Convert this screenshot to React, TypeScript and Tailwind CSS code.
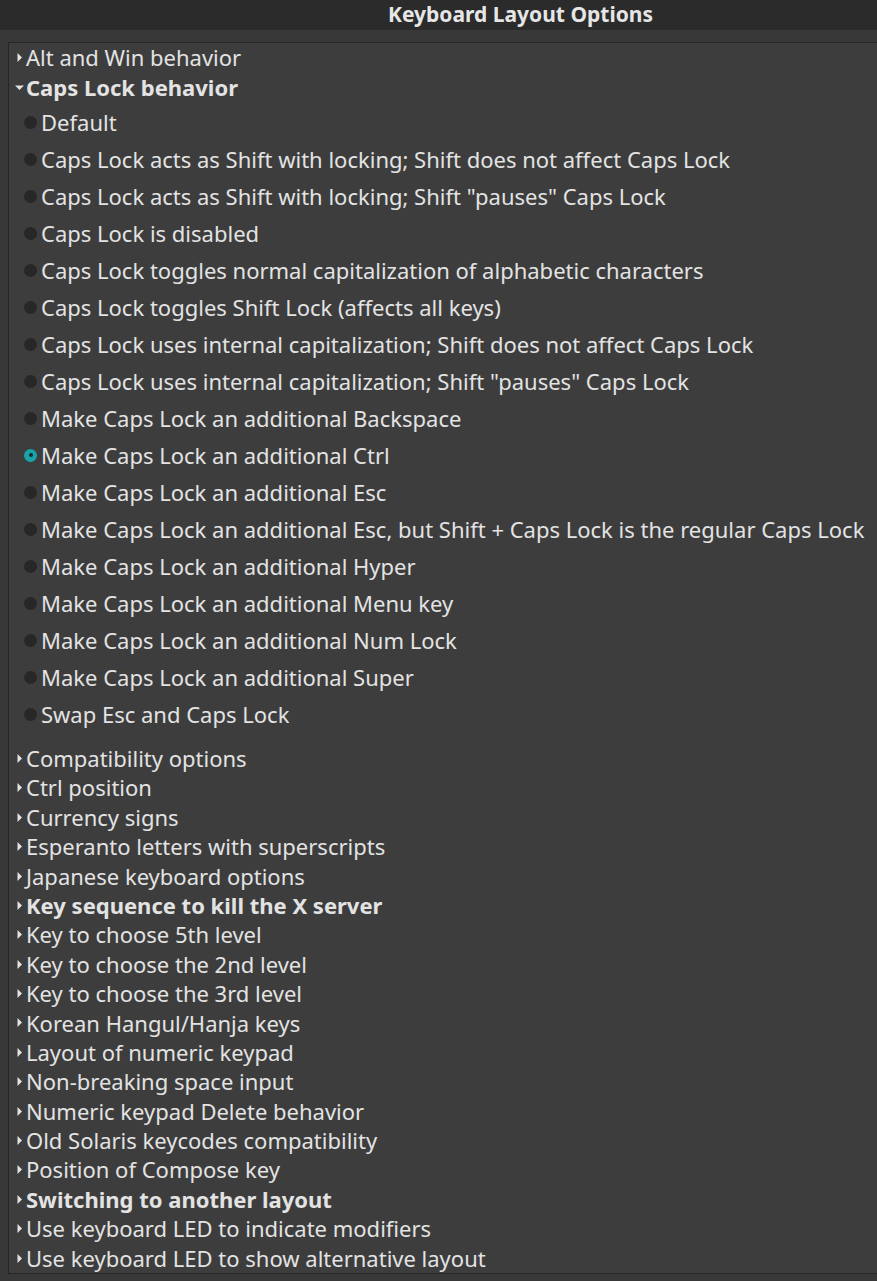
import React from 'react';

const font = { fontFamily: '"Noto Sans", "Open Sans", sans-serif' };

const radios = [
  'Default',
  'Caps Lock acts as Shift with locking; Shift does not affect Caps Lock',
  'Caps Lock acts as Shift with locking; Shift "pauses" Caps Lock',
  'Caps Lock is disabled',
  'Caps Lock toggles normal capitalization of alphabetic characters',
  'Caps Lock toggles Shift Lock (affects all keys)',
  'Caps Lock uses internal capitalization; Shift does not affect Caps Lock',
  'Caps Lock uses internal capitalization; Shift "pauses" Caps Lock',
  'Make Caps Lock an additional Backspace',
  'Make Caps Lock an additional Ctrl',
  'Make Caps Lock an additional Esc',
  'Make Caps Lock an additional Esc, but Shift + Caps Lock is the regular Caps Lock',
  'Make Caps Lock an additional Hyper',
  'Make Caps Lock an additional Menu key',
  'Make Caps Lock an additional Num Lock',
  'Make Caps Lock an additional Super',
  'Swap Esc and Caps Lock',
];

const groups: { label: string; bold?: boolean }[] = [
  { label: 'Compatibility options' },
  { label: 'Ctrl position' },
  { label: 'Currency signs' },
  { label: 'Esperanto letters with superscripts' },
  { label: 'Japanese keyboard options' },
  { label: 'Key sequence to kill the X server', bold: true },
  { label: 'Key to choose 5th level' },
  { label: 'Key to choose the 2nd level' },
  { label: 'Key to choose the 3rd level' },
  { label: 'Korean Hangul/Hanja keys' },
  { label: 'Layout of numeric keypad' },
  { label: 'Non-breaking space input' },
  { label: 'Numeric keypad Delete behavior' },
  { label: 'Old Solaris keycodes compatibility' },
  { label: 'Position of Compose key' },
  { label: 'Switching to another layout', bold: true },
  { label: 'Use keyboard LED to indicate modifiers' },
  { label: 'Use keyboard LED to show alternative layout' },
];

// expander triangles
const ArrowRight = () => (
  <svg width="7" height="11" viewBox="0 0 7 11" className="shrink-0">
    <path d="M1.5 1 L6 5.5 L1.5 10 Z" fill="#e2e2e2" />
  </svg>
);

const ArrowDown = () => (
  <svg width="11" height="7" viewBox="0 0 11 7" className="shrink-0">
    <path d="M1 1.5 L10 1.5 L5.5 6 Z" fill="#e2e2e2" />
  </svg>
);

const Expander = ({ label, bold, open }: { label: string; bold?: boolean; open?: boolean }) => (
  <div className="flex items-center h-[29.4px] pl-[3px]">
    <div className="w-[14px] flex justify-center">{open ? <ArrowDown /> : <ArrowRight />}</div>
    <span className={`text-[22px] text-[#e3e3e3] whitespace-nowrap ${bold ? 'font-bold' : ''}`}>{label}</span>
  </div>
);

const Radio = ({ label, checked }: { label: string; checked?: boolean }) => (
  <div className="flex items-center h-[37px] pl-[15px]">
    {checked ? (
      <span className="w-[13px] h-[13px] rounded-full bg-[#19a4aa] flex items-center justify-center shrink-0">
        <span className="w-[4px] h-[4px] rounded-full bg-[#1c2a2c]" />
      </span>
    ) : (
      <span className="w-[13px] h-[13px] rounded-full bg-[#272727] shrink-0" />
    )}
    <span className="ml-[4px] text-[22px] text-[#e3e3e3] whitespace-nowrap">{label}</span>
  </div>
);

export default function App() {
  return (
    <div className="w-[877px] h-[1281px] bg-[#383838] overflow-hidden flex flex-col" style={font}>
      <div className="h-[30px] bg-[#2b2b2b] shrink-0 flex items-center pl-[388px]">
        <span className="text-[21px] font-bold text-[#e6e6e6] whitespace-nowrap">Keyboard Layout Options</span>
      </div>
      <div className="flex-1 pt-[12px] pl-[8px] pb-[7px]">
        <div className="h-full bg-[#3d3d3d] border-t border-l border-b border-[#262626] overflow-hidden">
          <Expander label="Alt and Win behavior" />
          <Expander label="Caps Lock behavior" bold open />
          <div className="pt-[2px] pb-[11px]">
            {radios.map((r) => (
              <Radio key={r} label={r} checked={r === 'Make Caps Lock an additional Ctrl'} />
            ))}
          </div>
          {groups.map((g) => (
            <Expander key={g.label} label={g.label} bold={g.bold} />
          ))}
        </div>
      </div>
    </div>
  );
}
